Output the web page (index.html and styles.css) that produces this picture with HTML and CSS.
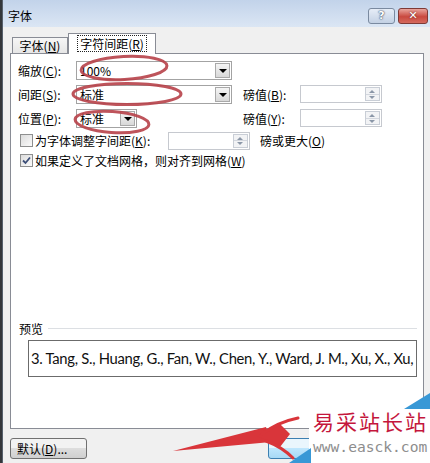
FILE: index.html
```html
<!DOCTYPE html>
<html lang="zh-CN">
<head>
    <meta charset="UTF-8">
    <meta name="viewport" content="width=device-width, initial-scale=1.0">
    <title>字体</title>
    <link rel="stylesheet" href="styles.css">
</head>
<body>
<div class="screen">
    <div class="window">
        <div class="titlebar">
            <span class="title">字体</span>
            <div class="caption">
                <span class="cap_btn cap_help">?</span>
                <span class="cap_btn cap_close">✕</span>
            </div>
        </div>
        <div class="client">
            <div class="tabs">
                <div class="tab">字体(<u>N</u>)</div>
                <div class="tab tab_on"><span class="focus">字符间距(<u>R</u>)</span></div>
            </div>
            <div class="panel">
                <div class="grid">
                    <span class="lbl">缩放(<u>C</u>):</span>
                    <div class="combo"><span class="combo_val">100%</span><span class="combo_btn"></span></div>
                    <span></span><span></span>

                    <span class="lbl">间距(<u>S</u>):</span>
                    <div class="combo"><span class="combo_val">标准</span><span class="combo_btn"></span></div>
                    <span class="lbl lbl_pt">磅值(<u>B</u>):</span>
                    <div class="spin"><span class="spin_btns"><i class="up"></i><i class="down"></i></span></div>

                    <span class="lbl">位置(<u>P</u>):</span>
                    <div class="combo combo_small"><span class="combo_val">标准</span><span class="combo_btn"></span></div>
                    <span class="lbl lbl_pt">磅值(<u>Y</u>):</span>
                    <div class="spin"><span class="spin_btns"><i class="up"></i><i class="down"></i></span></div>
                </div>
                <div class="check_row">
                    <span class="checkbox"></span>
                    <span class="check_lbl check_lbl_fixed">为字体调整字间距(<u>K</u>):</span>
                    <div class="spin"><span class="spin_btns"><i class="up"></i><i class="down"></i></span></div>
                    <span class="after_spin">磅或更大(<u>O</u>)</span>
                </div>
                <div class="check_row check_row2">
                    <span class="checkbox checked">
                        <svg width="9" height="9" viewBox="0 0 9 9"><path d="M1 4.5 L3.5 7 L8 1.5" fill="none" stroke="#3d4f78" stroke-width="1.8"/></svg>
                    </span>
                    <span class="check_lbl">如果定义了文档网格，则对齐到网格(<u>W</u>)</span>
                </div>

                <div class="preview">
                    <div class="preview_head">
                        <span>预览</span>
                        <span class="preview_line"></span>
                    </div>
                    <div class="preview_box">3. Tang, S., Huang, G., Fan, W., Chen, Y., Ward, J. M., Xu, X., Xu,</div>
                </div>
            </div>
            <div class="footer">
                <button class="btn btn_default" type="button">默认(<u>D</u>)...</button>
                <button class="btn btn_ok" type="button">确定</button>
                <button class="btn" type="button">取消</button>
            </div>
        </div>
    </div>

    <!-- red marks drawn over the dialog -->
    <svg class="marks" width="430" height="463" viewBox="0 0 430 463">
        <g fill="none" stroke="#b8424a" stroke-width="3" opacity="0.9">
            <ellipse cx="124" cy="68" rx="43" ry="11.5" transform="rotate(-3 124 68)"/>
            <ellipse cx="127" cy="94" rx="54" ry="10.5"/>
            <ellipse cx="112" cy="122" rx="37" ry="10.5" transform="rotate(4 112 122)"/>
        </g>
        <g fill="#d9353a">
            <polygon points="173,451 266,427 271,442"/>
            <polygon points="257,436 280,424 290,434 280,447"/>
        </g>
        <g fill="none" stroke="#d9353a" stroke-width="3" stroke-linecap="round">
            <path d="M262 434 Q278 422 298 418"/>
            <path d="M266 441 Q282 447 293 458"/>
        </g>
    </svg>

    <div class="watermark">
        <div class="wm_cn">易采站长站</div>
        <div class="wm_url">www.easck.com</div>
    </div>
    <svg class="wm_corner" width="430" height="463" viewBox="0 0 430 463">
        <polygon points="404,409 430,393 430,409" fill="#3898d6"/>
        <polygon points="289,463 311,448 311,463" fill="#3898d6"/>
    </svg>
</div>
</body>
</html>
```

FILE: styles.css
```css
*{
    box-sizing: border-box;
}
body{
    margin: 0;
    width: 430px;
    height: 463px;
    overflow: hidden;
    background-color: #34373b;
    font-family: "Noto Sans CJK SC", "Noto Sans", sans-serif;
    font-size: 12px;
    color: #000;
}
u{
    text-decoration: underline;
}
.screen{
    position: relative;
    width: 430px;
    height: 463px;
}
.window{
    margin-left: 2px;
    height: 463px;
    background-color: #f0f0f0;
    border-left: 1px solid #56606c;
}
.titlebar{
    height: 27px;
    padding: 4px 2px 0 5px;
    display: flex;
    align-items: center;
    justify-content: space-between;
    background: linear-gradient(#c2d3ea, #dbe6f4);
}
.title{
    font-size: 12px;
}
.caption{
    display: flex;
    gap: 3px;
}
.cap_btn{
    height: 16px;
    border-radius: 3px;
    display: flex;
    align-items: center;
    justify-content: center;
    color: #fff;
    font-family: "DejaVu Sans", sans-serif;
    font-weight: bold;
    font-size: 11px;
}
.cap_help{
    width: 27px;
    border: 1px solid #7a8aa0;
    background: linear-gradient(#e6edf7, #c3d1e4);
    text-shadow: 0 0 2px #2c3c58, 0 0 1px #2c3c58;
}
.cap_close{
    width: 30px;
    border: 1px solid #7e3a36;
    background: linear-gradient(#e9a59d, #c9493f 55%, #d56a5e);
    text-shadow: 0 0 2px #5a1a16;
}
.client{
    padding: 6px 6px 0 7px;
}
.tabs{
    position: relative;
    z-index: 1;
    height: 21px;
    margin-bottom: -1px;
    padding-left: 2px;
    display: flex;
    align-items: flex-start;
}
.tab{
    margin-top: 4px;
    width: 56px;
    height: 16px;
    border: 1px solid #898c95;
    border-bottom: none;
    background: linear-gradient(#f6f6f6, #e6e6e6);
    display: flex;
    align-items: center;
    justify-content: center;
    font-size: 12px;
}
.tab_on{
    margin-top: 0;
    width: 88px;
    height: 21px;
    background: #fff;
    padding-bottom: 2px;
}
.focus{
    outline: 1px dotted #222;
    padding: 0 2px;
    line-height: 15px;
}
.panel{
    width: 414px;
    height: 376px;
    border: 1px solid #898c95;
    background-color: #fff;
    padding: 6px 0 0 7px;
    display: flex;
    flex-direction: column;
}
.grid{
    display: grid;
    grid-template-columns: 58px 156px 68px 82px;
    grid-auto-rows: 20px;
    row-gap: 4px;
    align-items: center;
}
.lbl{
    white-space: nowrap;
}
.lbl_pt{
    padding-left: 11px;
}
.combo{
    height: 19px;
    border: 1px solid #a3a3a3;
    background: #fff;
    display: flex;
    align-items: center;
}
.combo_small{
    width: 61px;
}
.combo_val{
    flex: 1;
    padding-left: 3px;
    line-height: 17px;
}
.combo_btn{
    width: 15px;
    height: 15px;
    margin-right: 1px;
    border: 1px solid #a9a9a9;
    background: linear-gradient(#f5f5f5, #d8d8d8);
    position: relative;
}
.combo_btn::after{
    content: "";
    position: absolute;
    left: 3px;
    top: 5px;
    border-left: 4px solid transparent;
    border-right: 4px solid transparent;
    border-top: 4px solid #000;
}
.spin{
    width: 82px;
    height: 18px;
    border: 1px solid #c6c9cf;
    background: #fff;
    display: flex;
    justify-content: flex-end;
}
.spin_btns{
    width: 15px;
    margin: 1px;
    display: flex;
    flex-direction: column;
    border: 1px solid #c9ced6;
    background: #f2f3f5;
}
.spin_btns i{
    flex: 1;
    position: relative;
}
.spin_btns .up{
    border-bottom: 1px solid #d3d7de;
}
.spin_btns i::after{
    content: "";
    position: absolute;
    left: 3px;
    top: 2px;
    border-left: 3px solid transparent;
    border-right: 3px solid transparent;
}
.spin_btns .up::after{
    border-bottom: 3px solid #8b97a8;
}
.spin_btns .down::after{
    top: 1px;
    border-top: 3px solid #8b97a8;
}
.check_row{
    margin-top: 3px;
    height: 19px;
    display: flex;
    align-items: center;
}
.check_row2{
    height: 16px;
    margin-top: 2px;
}
.checkbox{
    width: 13px;
    height: 13px;
    margin-left: 2px;
    margin-right: 2px;
    border: 1px solid #8e8f8f;
    background: linear-gradient(135deg, #dcdcdc, #fbfbfb);
    display: flex;
    align-items: center;
    justify-content: center;
}
.check_lbl{
    white-space: nowrap;
}
.check_lbl_fixed{
    width: 133px;
}
.after_spin{
    margin-left: 10px;
}
.preview{
    margin-top: auto;
    margin-bottom: 51px;
}
.preview_head{
    height: 16px;
    display: flex;
    align-items: center;
    padding-left: 1px;
}
.preview_line{
    flex: 1;
    height: 1px;
    margin: 0 6px 0 5px;
    background-color: #dcdfe3;
}
.preview_box{
    margin: 4px 0 0 10px;
    width: 389px;
    height: 37px;
    border: 1px solid #6b6b6b;
    padding-left: 2px;
    line-height: 35px;
    font-family: Lato, "Noto Sans", sans-serif;
    font-size: 14.8px;
    letter-spacing: -0.3px;
    color: #111;
    white-space: nowrap;
    overflow: hidden;
}
.footer{
    margin-top: 9px;
    display: flex;
    gap: 6px;
}
.btn{
    width: 75px;
    height: 21px;
    border: 1px solid #707070;
    border-radius: 3px;
    background: linear-gradient(#f2f2f2 45%, #dddddd 50%, #cfcfcf);
    font-family: "Noto Sans CJK SC", sans-serif;
    font-size: 12px;
    padding: 0;
}
.btn_default{
    width: 77px;
    text-align: left;
    padding-left: 6px;
    margin-right: auto;
}
.btn_ok{
    border-color: #3c7fb1;
    background: linear-gradient(#eaf6fd 45%, #bee6fd 50%, #a7d9f5);
    text-align: left;
    padding-left: 46px;
}
.marks{
    position: absolute;
    left: 0;
    top: 0;
}
.watermark{
    position: absolute;
    left: 309px;
    top: 407px;
    width: 121px;
    height: 56px;
    background-color: #fff;
    padding-left: 4px;
}
.wm_cn{
    margin-top: 2px;
    font-size: 21px;
    letter-spacing: 2px;
    line-height: 25px;
    color: #c4163c;
    white-space: nowrap;
}
.wm_url{
    margin-top: 4px;
    font-family: "DejaVu Sans Mono", monospace;
    font-size: 14.6px;
    line-height: 18px;
    color: #8d8d8d;
    white-space: nowrap;
}
.wm_corner{
    position: absolute;
    left: 0;
    top: 0;
}
```
